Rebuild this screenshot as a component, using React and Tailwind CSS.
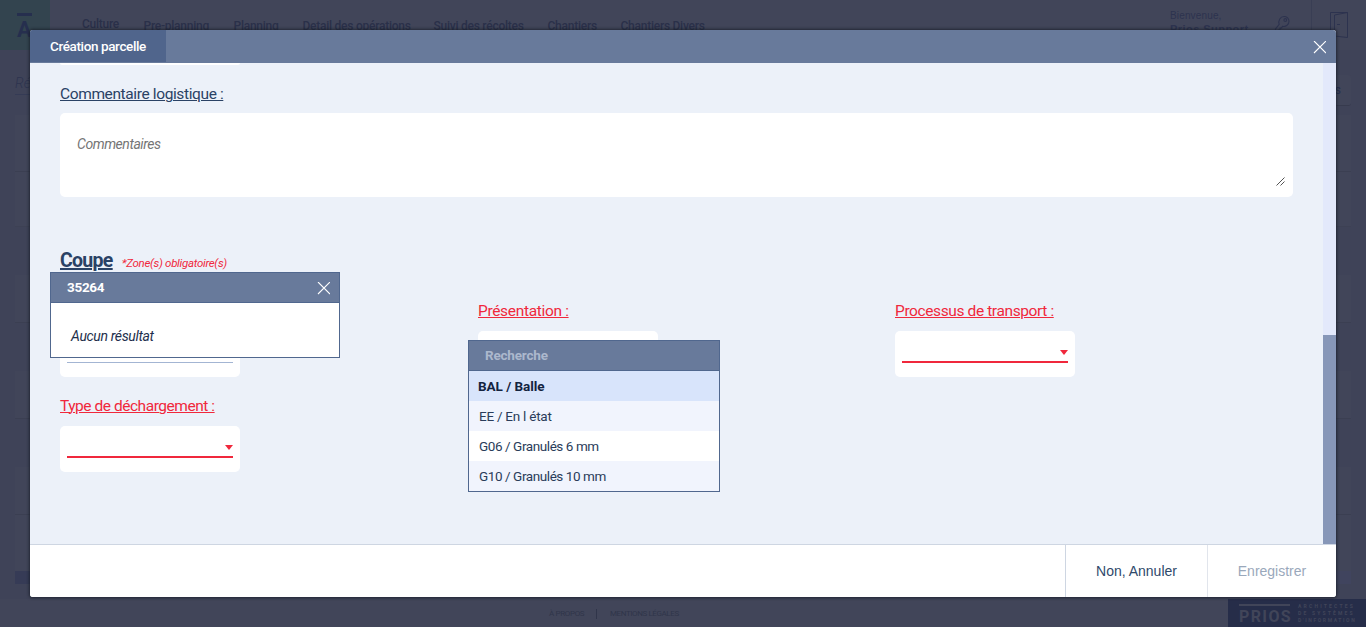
import React from "react";

function CloseIcon({ className }) {
  return (
    <svg viewBox="0 0 13 13" className={className} fill="none" stroke="#fff" strokeWidth="1.1">
      <path d="M1 0l12 12M13 0l-12 12" />
    </svg>
  );
}

function Label({ className = "", children }) {
  return (
    <div className={`h-5 whitespace-nowrap text-[15.5px] leading-[21px] underline decoration-1 underline-offset-1 ${className}`}>
      {children}
    </div>
  );
}

function Select({ plain = false }) {
  return (
    <div className="flex h-[46px] w-[180px] flex-col rounded-[5px] bg-white px-[7px]">
      <div
        className={`flex h-8 items-end justify-end ${
          plain ? "border-b border-[#a3b5d3]" : "border-b-2 border-[#f0283c] pb-1.5"
        }`}
      >
        {!plain && (
          <svg viewBox="0 0 8 5" className="h-[5px] w-2" fill="#f0283c">
            <path d="M0 0h8L4 5z" />
          </svg>
        )}
      </div>
    </div>
  );
}

function SideRows() {
  return (
    <div className="flex w-full justify-between px-[15px] pt-[15px]">
      {[0, 1].map((side) => (
        <div key={side} className="flex w-5 flex-col">
          <div className="h-[57px] border-b border-[#3b3f52] bg-[#414559]" />
          <div className="h-[55px] border-b border-[#3d4154] bg-[#414559]" />
          <div className="mt-12 h-12 border-b border-[#3b3f52] bg-[#414559]" />
          <div className="mt-12 h-12 border-b border-[#3b3f52] bg-[#414559]" />
          <div className="mt-12 h-12 border-b border-[#3b3f52] bg-[#414559]" />
          <div className="h-14 bg-[#414559]" />
          <div className={side ? "h-[13px] bg-[#40445e]" : "h-[13px] bg-[#363b56]"} />
        </div>
      ))}
    </div>
  );
}

function Background() {
  return (
    <div className="flex h-full flex-col text-[#262f4e]">
      <header className="flex h-[50px] shrink-0 items-start bg-[#414559]">
        <div className="flex h-[50px] w-[50px] flex-col items-start bg-[#33444f] pl-[17px] pt-[13px]">
          <div className="h-[3px] w-[15px] bg-[#262f4e]" />
          <div className="mt-1 text-[22px] font-bold leading-[19px]">A</div>
        </div>
        <nav className="flex pl-8 pt-[17px] text-[12px] font-medium leading-4 tracking-[-0.25px] text-[#2a3049]">
          <span className="-mt-px w-[61.5px]">Culture</span>
          <span className="w-[90px] whitespace-nowrap pt-px">Pre-planning</span>
          <span className="w-[69px] pt-px">Planning</span>
          <span className="w-[131px] whitespace-nowrap pt-px">Detail des opérations</span>
          <span className="w-[114px] whitespace-nowrap pt-px">Suivi des récoltes</span>
          <span className="w-[73px] pt-px">Chantiers</span>
          <span className="whitespace-nowrap pt-px">Chantiers Divers</span>
        </nav>
        <div className="ml-auto flex h-full text-[#2d334f]">
          <div className="w-[104px] pt-[10px] font-['Liberation_Sans'] text-[10px] leading-3">
            <div className="tracking-[0.15px]">Bienvenue,</div>
            <div className="whitespace-nowrap text-[11px] font-bold leading-[14px] tracking-[0.45px]">Prios Support</div>
          </div>
          <svg viewBox="0 0 18 20" className="mt-[15px] h-5 w-[18px]" fill="none" stroke="currentColor" strokeWidth="1.1">
            <path d="M5.200 9.300C4 5.500 6.200 1.500 10 1.500c3 0 5 2 5 4.700C15 9.500 12 12 8.500 11.300L7.500 13H6v2H4.500v2H1.500v-3z" />
            <circle cx="11.300" cy="5" r="1.400" />
          </svg>
          <div className="ml-[19px] h-full w-[55px] border-l border-[#393e54] pl-[18px] pt-3">
            <svg viewBox="0 0 18 26" className="h-[26px] w-[18px]" fill="none" stroke="currentColor">
              <path d="M4.500 24.500h-4V.5h17v25l-13-1.500V3l13-2.500M7 12.500h3" />
            </svg>
          </div>
        </div>
      </header>
      <main className="flex grow flex-col bg-[#3f4358]">
        <div className="flex h-[50px] items-start justify-between px-[15px] pt-[25px]">
          <div className="h-5 w-20 border-b border-[#353b55] text-[14px] font-light italic leading-4 text-[#2d334f]">Réf</div>
          <div className="flex h-[31px] w-9 items-center justify-end rounded-[3px] border-b border-[#373b4e] bg-[#414559] pr-[10px] text-xs text-[#262f4e]">
            s
          </div>
        </div>
        <SideRows />
      </main>
      <footer className="flex h-7 shrink-0 bg-[#414559] text-[#30354a]">
        <div className="flex w-[1228px] items-center pl-[549px] pt-0.5 text-[8px]">
          <span className="w-[47px] whitespace-nowrap tracking-[-0.35px]">À PROPOS</span>
          <span className="h-2.5 w-[14px] border-l border-[#30354a]" />
          <span className="whitespace-nowrap tracking-[-0.4px]">MENTIONS LÉGALES</span>
        </div>
        <div className="flex w-[138px] bg-[#262d49] pl-[11px] text-[#414559]">
          <div className="mt-[5px] h-5 w-[51px] border-t-2 border-[#414559] pt-0.5 text-[16px] font-bold leading-[18px] tracking-[1.400px]">
            PRIOS
          </div>
          <div className="ml-2 mt-[4px] whitespace-nowrap text-[5px] font-bold leading-[7px]">
            <div className="tracking-[2.200px]">ARCHITECTES</div>
            <div className="tracking-[2.200px]">DE SYSTÈMES</div>
            <div className="tracking-[1.600px]">D'INFORMATION</div>
          </div>
        </div>
      </footer>
    </div>
  );
}

function SearchPopup() {
  return (
    <div className="absolute left-5 top-[209px] flex h-[86px] w-[290px] flex-col border border-[#50678e] bg-white">
      <div className="flex h-[30px] items-center justify-between border-b border-[#50678e] bg-[#687a9b] pl-4 pr-[9px]">
        <span className="text-[13.5px] font-bold tracking-[-0.3px] text-white">35264</span>
        <CloseIcon className="mt-[2px] h-[13px] w-[13px]" />
      </div>
      <div className="pl-5 pt-6 text-[14px] italic leading-[18px] tracking-[-0.35px] text-[#1e2f4c]">Aucun résultat</div>
    </div>
  );
}

const options = [
  { text: "BAL / Balle", style: "bg-[#d8e4fb] pl-[9px] font-bold text-[#13233f] tracking-[-0.05px]" },
  { text: "EE / En l état", style: "bg-[#f1f4fd] pl-[10px] text-[#2a3c5a] tracking-[-0.25px]" },
  { text: "G06 / Granulés 6 mm", style: "bg-white pl-[10px] text-[#2a3c5a] tracking-[-0.42px]" },
  { text: "G10 / Granulés 10 mm", style: "bg-[#f1f4fd] pl-[10px] text-[#2a3c5a] tracking-[-0.42px]" },
];

function OptionsPopup() {
  return (
    <div className="absolute left-[438px] top-[277px] flex w-[252px] flex-col border border-[#50678e] bg-white">
      <div className="flex h-[30px] items-center border-b border-[#50678e] bg-[#687a9b] pl-4 text-[13.5px] font-bold tracking-[-0.2px] text-[#acb8cd]">
        Recherche
      </div>
      {options.map((o) => (
        <div key={o.text} className={`h-[30px] text-[13.5px] leading-[30px] ${o.style}`}>
          {o.text}
        </div>
      ))}
    </div>
  );
}

function Modal() {
  return (
    <div className="absolute left-[30px] top-[30px] flex h-[567px] w-[1306px] flex-col overflow-hidden rounded-[3px] bg-white">
      <div className="flex h-[33px] shrink-0 items-start justify-between bg-[#687a9b] pr-[10px]">
        <div className="h-8 w-[136px] whitespace-nowrap bg-[#50658c] pl-5 text-[13.5px] font-medium leading-[33px] tracking-[-0.38px] text-white">
          Création parcelle
        </div>
        <CloseIcon className="mt-[11px] h-[13px] w-[13px]" />
      </div>
      <div className="relative flex h-[481px] shrink-0 bg-[#ecf1f9] text-[#2a4265]">
        <div className="flex w-[1293px] flex-col px-[30px]">
          <div className="h-0.5 w-[180px] rounded-b-[5px] bg-white" />
          <Label className="mt-[19px] tracking-[-0.38px]">Commentaire logistique :</Label>
          <textarea
            placeholder="Commentaires"
            className="mt-[9px] block h-[84px] w-[1233px] shrink-0 resize-none rounded-[5px] bg-white px-[17px] pt-[21px] text-[14px] italic leading-5 tracking-[-0.45px] outline-none placeholder:text-[#757575]"
          />
          <div className="mt-[51px] flex h-[26px] items-baseline whitespace-nowrap">
            <h2 className="text-[19.5px] font-bold leading-[26px] tracking-[-0.7px] underline decoration-2 underline-offset-1">Coupe</h2>
            <span className="ml-[9px] text-[11.5px] italic tracking-[-0.3px] text-[#f0283c]">*Zone(s) obligatoire(s)</span>
          </div>
          <div className="mt-[27px] flex text-[#f0283c]">
            <div className="w-[418px]">
              <Label>Transporteur :</Label>
              <div className="mt-[10px]">
                <Select plain />
              </div>
            </div>
            <div className="w-[417px]">
              <Label className="tracking-[-0.33px]">Présentation :</Label>
              <div className="mt-[10px]">
                <Select />
              </div>
            </div>
            <div className="w-[180px]">
              <Label className="tracking-[-0.39px]">Processus de transport :</Label>
              <div className="mt-[10px]">
                <Select />
              </div>
            </div>
          </div>
          <div className="mt-[19px] text-[#f0283c]">
            <Label className="tracking-[-0.46px]">Type de déchargement :</Label>
            <div className="mt-[10px]">
              <Select />
            </div>
          </div>
        </div>
        <svg viewBox="0 0 9 9" className="absolute left-[1246px] top-[114px] h-[9px] w-[9px]" stroke="#555" fill="none">
          <path d="M.5 8.500l8-8M4.500 8.500l4-4" />
        </svg>
        <div className="flex w-[13px] flex-col justify-end bg-[#e3e9fb]">
          <div className="h-[209px] bg-[#8797b8]" />
        </div>
        <SearchPopup />
        <OptionsPopup />
      </div>
      <div className="flex h-[53px] justify-end border-t border-[#ced6e2] bg-white font-['Liberation_Sans'] text-[14px]">
        <button className="w-[142px] border-l border-[#ced6e2] text-[#2f496b]">Non, Annuler</button>
        <button className="w-[129px] border-l border-[#e1e5ec] text-[#9aa8bb]">Enregistrer</button>
      </div>
    </div>
  );
}

export default function App() {
  return (
    <div className="relative h-[627px] w-[1366px] overflow-hidden bg-[#3f4358] font-[Roboto,'Liberation_Sans',sans-serif]">
      <Background />
      <div className="absolute left-[30px] top-[30px] h-[567px] w-[1306px] rounded-[3px] shadow-[0_0_3px_1px_rgba(20,24,36,0.7)]" />
      <Modal />
    </div>
  );
}
